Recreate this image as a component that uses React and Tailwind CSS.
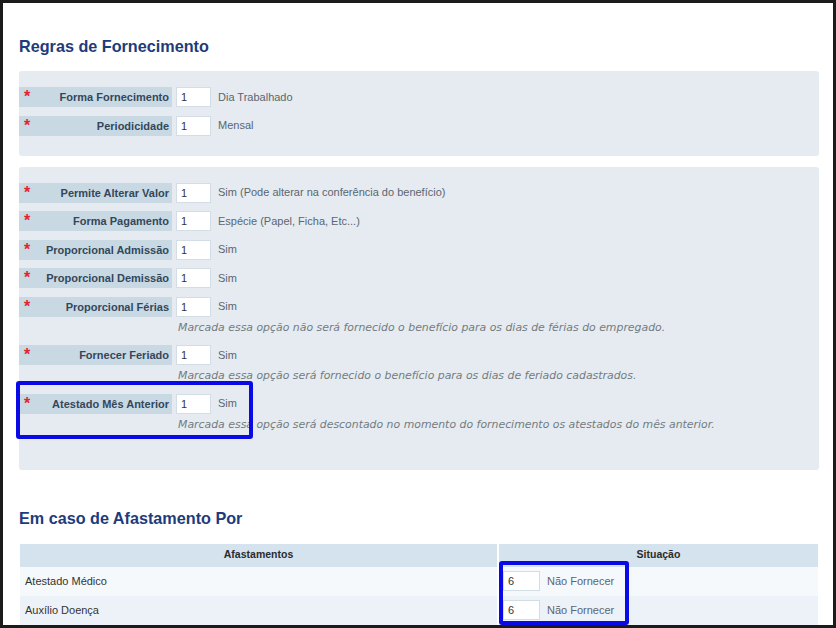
import React from 'react';

const RULES_TOP = [
    { label: 'Forma Fornecimento', value: '1', desc: 'Dia Trabalhado' },
    { label: 'Periodicidade', value: '1', desc: 'Mensal' },
];

const RULES = [
    { label: 'Permite Alterar Valor', value: '1', desc: 'Sim (Pode alterar na conferência do benefício)' },
    { label: 'Forma Pagamento', value: '1', desc: 'Espécie (Papel, Ficha, Etc...)' },
    { label: 'Proporcional Admissão', value: '1', desc: 'Sim' },
    { label: 'Proporcional Demissão', value: '1', desc: 'Sim' },
    { label: 'Proporcional Férias', value: '1', desc: 'Sim', hint: 'Marcada essa opção não será fornecido o benefício para os dias de férias do empregado.' },
    { label: 'Fornecer Feriado', value: '1', desc: 'Sim', hint: 'Marcada essa opção será fornecido o benefício para os dias de feriado cadastrados.' },
    { label: 'Atestado Mês Anterior', value: '1', desc: 'Sim', hint: 'Marcada essa opção será descontado no momento do fornecimento os atestados do mês anterior.' },
];

const AFASTAMENTOS = [
    { nome: 'Atestado Médico', codigo: '6', situacao: 'Não Fornecer' },
    { nome: 'Auxílio Doença', codigo: '6', situacao: 'Não Fornecer' },
];

const sans = "font-['Liberation_Sans',Arial,sans-serif]";

const FieldRow = ({ label, value, desc, hint }) => (
    <div className="flex flex-col">
        <div className="flex items-center h-[20px]">
            <div className="flex items-start justify-between w-[153px] h-[20px] bg-[#c8d9e4] pl-[5px] pr-[3px]">
                <span className="text-[#e3242b] text-[16px] leading-none font-bold mt-[2px]">*</span>
                <span className="text-[11px] leading-[20px] font-bold text-[#34475a]">{label}</span>
            </div>
            <input
                readOnly
                value={value}
                className="ml-[4px] w-[35px] h-[20px] bg-white border border-[#d3dde5] pl-[4px] text-[11px] text-[#333] outline-none"
            />
            <span className="ml-[7px] text-[11px] text-[#5b6670]">{desc}</span>
        </div>
        {hint && (
            <div className="mt-[1px] h-[19px] leading-[19px] pl-[159px] text-[10.9px] italic text-[#737b81] font-['DejaVu_Sans',Verdana,sans-serif]">
                {hint}
            </div>
        )}
    </div>
);

export default function App() {
    return (
        <div className={`w-[836px] h-[628px] bg-[#1b1b1b] p-[3px] ${sans}`}>
            <div className="relative w-full h-full bg-white overflow-hidden pl-[16px] pr-[14px] pt-[33px]">
                <h2 className="text-[16.2px] leading-[20px] font-bold text-[#1e3b7a]">Regras de Fornecimento</h2>

                <div className="mt-[15px] w-[800px] bg-[#e5ebf0] rounded-[3px] pt-[16px] pb-[20px] flex flex-col gap-[8.5px]">
                    {RULES_TOP.map(r => <FieldRow key={r.label} {...r} />)}
                </div>

                <div className="mt-[11px] w-[800px] bg-[#e5ebf0] rounded-[3px] pt-[16px] pb-[36px] flex flex-col gap-[8.5px]">
                    {RULES.map(r => <FieldRow key={r.label} {...r} />)}
                </div>

                <h2 className="mt-[38px] text-[16.2px] leading-[20px] font-bold text-[#1e3b7a]">Em caso de Afastamento Por</h2>

                <table className="mt-[16px] ml-[1px] w-[798px] border-collapse text-[11px] text-[#333]">
                    <thead>
                        <tr className="h-[23px] bg-[#d5e3ef]">
                            <th className="w-[478px] border-r-2 border-white text-[10.5px] font-bold text-[#2b2b2b]">Afastamentos</th>
                            <th className="text-[10.5px] font-bold text-[#2b2b2b]">Situação</th>
                        </tr>
                    </thead>
                    <tbody>
                        {AFASTAMENTOS.map((a, i) => (
                            <tr key={a.nome} className={`h-[29px] ${i % 2 === 0 ? 'bg-[#f6f9fc]' : 'bg-[#edf2f9]'}`}>
                                <td className="pl-[5px] border-r-2 border-white">{a.nome}</td>
                                <td className="pl-[4px]">
                                    <div className="flex items-center">
                                        <input
                                            readOnly
                                            value={a.codigo}
                                            className="w-[37px] h-[20px] bg-white border border-[#d3dde5] pl-[4px] text-[11px] text-[#333] outline-none"
                                        />
                                        <span className="ml-[7px] text-[#5b6670]">{a.situacao}</span>
                                    </div>
                                </td>
                            </tr>
                        ))}
                    </tbody>
                </table>

                <div className="absolute left-[13px] top-[378px] w-[237px] h-[58px] border-4 border-[#0a0ae6] rounded-[3px]" />
                <div className="absolute left-[496px] top-[558px] w-[130px] h-[64px] border-4 border-[#0a0ae6] rounded-[3px]" />
            </div>
        </div>
    );
}
